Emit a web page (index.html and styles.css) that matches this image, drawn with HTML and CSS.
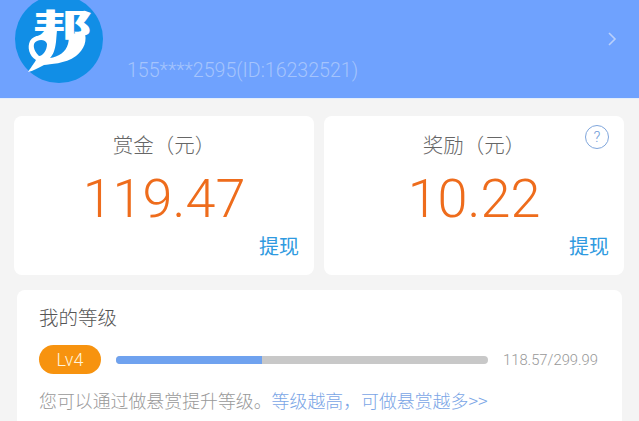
FILE: index.html
```html
<!DOCTYPE html>
<html>
    <head>
        <title>我的赏金</title>
        <meta charset="utf-8">
        <link rel="stylesheet" href="styles.css">
    </head>
    <body>
        <div class="header">
            <svg class="logo" width="88" height="88" viewBox="15 -5 88 88">
                <circle cx="59" cy="39" r="44" fill="#118ee6"/>
                <!-- the top half of the mark, the swoosh underneath is drawn -->
                <text class="logo_top" transform="translate(33 36) scale(1.08 .55)">邦</text>
                <path fill="#fff" fill-rule="evenodd" d="M28 72 C32 66 35 62 36 60 C29 56 27 47 30 41 C33 36 40 34 47 38 L48 30 L57 30 L56 42 C55 50 53 55 50 58 C58 57 66 52 68 44 C69 40 69 37 68 35 L84 31 C88 40 84 50 76 56 C65 64 50 64 44 65 C38 68 33 71 28 72 Z M37 41 C32 43 33 50 39 56 C43 56 47 50 47 44 C46 40 41 39 37 41 Z"/>
            </svg>
            <div class="account">155****2595(ID:16232521)</div>
            <svg class="arrow" width="10" height="16" viewBox="0 0 10 16">
                <path d="M2 2 L8 8 L2 14" fill="none" stroke="#b9d0fb" stroke-width="1.6"/>
            </svg>
        </div>

        <div class="cards">
            <div class="card">
                <div class="card_title">赏金（元）</div>
                <div class="amount">119.47</div>
                <div class="withdraw">提现</div>
            </div>
            <div class="card">
                <div class="help">?</div>
                <div class="card_title">奖励（元）</div>
                <div class="amount">10.22</div>
                <div class="withdraw">提现</div>
            </div>
        </div>

        <div class="level">
            <div class="level_title">我的等级</div>
            <div class="level_row">
                <div class="badge">Lv4</div>
                <div class="bar"><div class="bar_fill" style="width: 39.2%"></div></div>
                <div class="points">118.57/299.99</div>
            </div>
            <div class="level_note">您可以通过做悬赏提升等级。<span class="level_link">等级越高，可做悬赏越多&gt;&gt;</span></div>
        </div>
    </body>
</html>
```
FILE: styles.css
```css
html, body {
    height: 421px;
    overflow: hidden;
}
body {
    margin: 0;
    background-color: #f4f4f4;
    font-family: "Noto Sans CJK SC", sans-serif;
}
.header {
    height: 98px;
    display: flex;
    align-items: flex-start;
    padding-left: 15px;
    background-color: #6fa2fe;
    border-bottom: 1px solid #e3eefc;
    overflow: hidden;
}
.logo {
    margin-top: -5px;
    flex-shrink: 0;
}
.logo_top {
    font-family: "Noto Sans CJK SC", sans-serif;
    font-weight: 900;
    font-size: 55px;
    fill: #fff;
}
.account {
    margin-top: 60px;
    margin-left: 24px;
    flex-grow: 1;
    font-family: Roboto, sans-serif;
    font-weight: 300;
    font-size: 19.6px;
    line-height: 22px;
    color: #a5c4fc;
}
.arrow {
    margin-top: 31px;
    margin-right: 22px;
}
.cards {
    display: flex;
    gap: 10px;
    margin-top: 17px;
    padding-left: 14px;
}
.card {
    position: relative;
    width: 300px;
    height: 159px;
    box-sizing: border-box;
    padding-top: 15px;
    background-color: white;
    border-radius: 8px;
    text-align: center;
}
.card_title {
    font-size: 20.5px;
    line-height: 26px;
    font-weight: 300;
    color: #666;
}
.amount {
    margin-top: 14px;
    font-family: Roboto, sans-serif;
    font-weight: 300;
    font-size: 54px;
    line-height: 56px;
    color: #ee6c1c;
}
.withdraw {
    margin-top: 6px;
    padding-right: 15px;
    text-align: right;
    font-size: 20px;
    line-height: 26px;
    color: #2f9ae0;
}
.help {
    position: absolute;
    top: 9px;
    right: 15px;
    width: 22px;
    height: 22px;
    border: 1px solid #7fa6dc;
    border-radius: 50%;
    font-family: Roboto, sans-serif;
    font-size: 15px;
    font-weight: 300;
    line-height: 22px;
    color: #6f9bd8;
}
.level {
    width: 605px;
    height: 140px;
    box-sizing: border-box;
    margin-top: 15px;
    margin-left: 17px;
    padding: 14px 22px 0;
    background-color: white;
    border-radius: 8px;
}
.level_title {
    font-size: 19.5px;
    line-height: 26px;
    font-weight: 300;
    color: #555;
}
.level_row {
    display: flex;
    align-items: center;
    margin-top: 15px;
}
.badge {
    width: 62px;
    height: 29px;
    border-radius: 15px;
    background-color: #f7930f;
    color: #fff3dc;
    font-family: Roboto, sans-serif;
    font-weight: 300;
    font-size: 18px;
    line-height: 29px;
    text-align: center;
}
.bar {
    width: 372px;
    height: 8px;
    margin-left: 15px;
    border-radius: 4px;
    background-color: #c8c8c8;
    overflow: hidden;
}
.bar_fill {
    height: 8px;
    background-color: #6fa2ef;
}
.points {
    margin-left: 15px;
    font-family: Roboto, sans-serif;
    font-weight: 300;
    font-size: 14.8px;
    color: #999;
}
.level_note {
    margin-top: 13px;
    font-size: 17.9px;
    line-height: 26px;
    font-weight: 300;
    color: #999;
    white-space: nowrap;
}
.level_link {
    color: #7aa5e6;
}
```
